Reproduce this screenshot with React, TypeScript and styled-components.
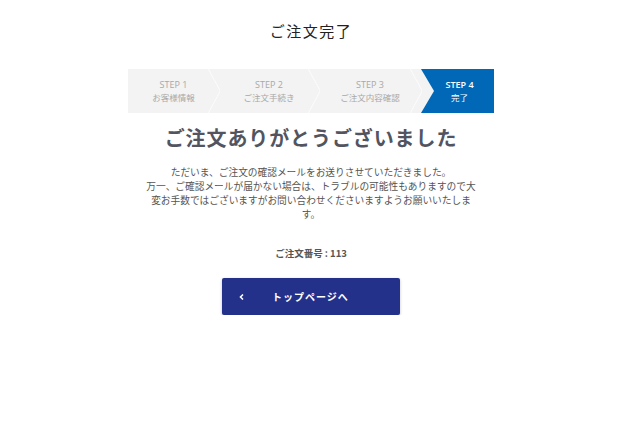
import React from "react";
import styled, { createGlobalStyle } from "styled-components";

const GlobalStyle = createGlobalStyle`
  body {
    margin: 0;
    background: #fff;
    font-family: "Noto Sans CJK JP", "Noto Sans", sans-serif;
  }
`;

interface stepProps {
  num: number;
  label: string;
  width: number;
  active?: boolean;
  last?: boolean;
}

const steps: stepProps[] = [
  { num: 1, label: "お客様情報", width: 91 },
  { num: 2, label: "ご注文手続き", width: 100 },
  { num: 3, label: "ご注文内容確認", width: 102 },
  { num: 4, label: "完了", width: 73, active: true, last: true },
];

const Step: React.FC<stepProps> = ({ num, label, width, active, last }) => {
  return (
    <StepItem $width={width} $active={active} $last={last}>
      <span className="stepNum">STEP {num}</span>
      <span className="stepLabel">{label}</span>
    </StepItem>
  );
};

const App: React.FC = () => {
  return (
    <>
      <GlobalStyle />
      <Page>
        <PageTitle>ご注文完了</PageTitle>
        <StepBar>
          {steps.map((s) => (
            <Step key={s.num} {...s} />
          ))}
        </StepBar>
        <Thanks>ご注文ありがとうございました</Thanks>
        <Message>
          ただいま、ご注文の確認メールをお送りさせていただきました。
          <br />
          万一、ご確認メールが届かない場合は、トラブルの可能性もありますので大
          <br />
          変お手数ではございますがお問い合わせくださいますようお願いいたしま
          <br />
          す。
        </Message>
        <OrderNo>ご注文番号 : 113</OrderNo>
        <TopButton>
          <svg width="8" height="8" viewBox="0 0 8 8">
            <path d="M5 1.5 L2.5 4 L5 6.5" fill="none" stroke="#fff" strokeWidth="1.6" />
          </svg>
          <span>トップページへ</span>
        </TopButton>
      </Page>
    </>
  );
};

export default App;

const Page = styled.div`
  width: 622px;
  padding-top: 19px;
  display: flex;
  flex-direction: column;
  align-items: center;
`;

const PageTitle = styled.h1`
  margin: 0;
  font-size: 15px;
  font-weight: 400;
  line-height: 24px;
  letter-spacing: 1.5px;
  color: #222;
`;

const StepBar = styled.div`
  margin-top: 26px;
  display: flex;
  height: 44px;
  background: #f3f3f3;
`;

const StepItem = styled.div<{ $width: number; $active?: boolean; $last?: boolean }>`
  position: relative;
  width: ${(p) => p.$width}px;
  display: flex;
  flex-direction: column;
  align-items: center;
  justify-content: center;
  font-size: 8.5px;
  line-height: 13px;
  color: ${(p) => (p.$active ? "#fff" : "#a8a8a8")};
  background: ${(p) => (p.$active ? "#0068b7" : "transparent")};
  ${(p) =>
    p.$active
      ? `
    &::before {
      content: "";
      position: absolute;
      left: 0;
      top: 0;
      border-style: solid;
      border-width: 22px 0 22px 13px;
      border-color: transparent transparent transparent #f3f3f3;
    }
  `
      : ""}
  ${(p) =>
    !p.$last
      ? `
    &::after {
      content: "";
      position: absolute;
      right: -1px;
      top: 0;
      width: 12px;
      height: 44px;
      background: linear-gradient(to top right, transparent 48%, #fcfcfc 50%, transparent 56%) top / 100% 50% no-repeat,
        linear-gradient(to bottom right, transparent 48%, #fcfcfc 50%, transparent 56%) bottom / 100% 50% no-repeat;
      z-index: 1;
    }
  `
      : ""}
  .stepNum {
    font-family: "Open Sans", "Noto Sans", sans-serif;
    font-size: 9px;
    font-weight: ${(p) => (p.$active ? 600 : 400)};
    padding-left: ${(p) => (p.$active ? "4px" : "0")};
  }
  .stepLabel {
    padding-left: ${(p) => (p.$active ? "4px" : "0")};
  }
`;

const Thanks = styled.h2`
  margin: 10px 0 0;
  font-size: 20px;
  line-height: 30px;
  font-weight: 700;
  letter-spacing: 0.9px;
  color: #52555f;
`;

const Message = styled.p`
  margin: 12px 0 0;
  font-size: 9.7px;
  line-height: 14px;
  color: #555;
  text-align: center;
  white-space: nowrap;
`;

const OrderNo = styled.div`
  margin-top: 25px;
  font-size: 9.5px;
  line-height: 14px;
  font-weight: 700;
  color: #555;
`;

const TopButton = styled.button`
  margin-top: 18px;
  width: 178px;
  height: 37px;
  border: none;
  border-radius: 2px;
  background: #23318a;
  box-shadow: 0 1px 3px rgba(0, 0, 0, 0.25);
  color: #fff;
  font-family: "Noto Sans CJK JP", sans-serif;
  font-size: 10px;
  font-weight: 700;
  letter-spacing: 1px;
  display: flex;
  align-items: center;
  padding: 0 0 0 16px;
  span {
    margin-left: 26px;
  }
`;
